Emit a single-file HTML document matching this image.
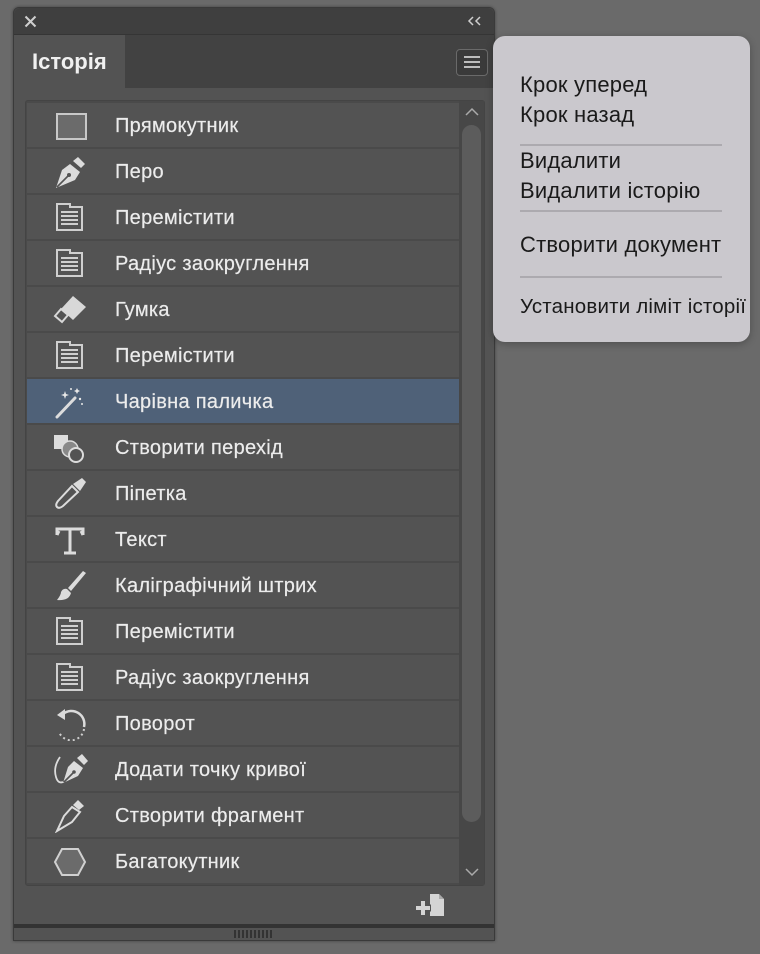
<!DOCTYPE html>
<html><head><meta charset="utf-8">
<style>
*{margin:0;padding:0;box-sizing:border-box}
body{width:760px;height:954px;background:#6a6a6a;font-family:"Liberation Sans","DejaVu Sans",sans-serif;position:relative;overflow:hidden}
.panel{position:absolute;left:13px;top:7px;width:482px;height:934px;background:#535353;border:1px solid #3a3a3a;border-radius:6px 6px 0 0;box-shadow:0 0 3px rgba(0,0,0,.4)}
.tbar{position:absolute;left:0;top:0;width:480px;height:26px;background:#3f3f3f;border-radius:6px 6px 0 0}
.tabs{position:absolute;left:0;top:26px;width:480px;height:54px;background:#424242;border-top:1px solid #353535}
.tab{position:absolute;left:0;top:0;width:111px;height:54px;background:#535353}
.tab span{position:absolute;left:18px;top:14px;font-size:22px;font-weight:bold;color:#f0f0f0}
.menubtn{position:absolute;left:442px;top:14px;width:32px;height:27px;border:1.5px solid #6a6a6a;border-radius:4px;background:#3a3a3a}
.menubtn i{position:absolute;left:7px;width:16px;height:2px;background:#bdbdbd}
.list{position:absolute;left:11px;top:92px;width:460px;height:786px;background:#4a4a4a;border:1px solid #444;border-radius:3px}
.row{position:absolute;left:1px;width:432px;height:44px;background:#535353}
.row.sel{background:#4f6178}
.row span{position:absolute;left:88px;top:12px;font-size:20px;color:#ececec;letter-spacing:.3px;-webkit-text-stroke:.2px #ececec}
.row svg{position:absolute;left:24px;top:6px}
.sb{position:absolute;left:433px;top:0;width:25px;height:784px;background:#474747}
.thumb{position:absolute;left:3px;top:24px;width:19px;height:697px;background:#5c5c5c;border-radius:10px}
.menu{position:absolute;left:493px;top:36px;width:257px;height:306px;background:#cac8cd;border-radius:12px;box-shadow:0 2px 8px rgba(0,0,0,.25)}
.menu div{position:absolute;left:27px;font-size:22px;color:#1a1a1a;letter-spacing:.2px}
.menu hr{position:absolute;left:27px;width:202px;border:0;height:2px;background:#acaaaf}
</style></head><body>
<div class="panel">
 <div class="tbar">
  <svg style="position:absolute;left:10px;top:7px" width="13" height="13"><path d="M1.5 1.5L11.5 11.5M11.5 1.5L1.5 11.5" stroke="#cfcfcf" stroke-width="2"/></svg>
  <svg style="position:absolute;left:453px;top:8px" width="16" height="10"><path d="M6 1L2 5L6 9M13 1L9 5L13 9" stroke="#cfcfcf" stroke-width="1.5" fill="none"/></svg>
 </div>
 <div class="tabs">
  <div class="tab"><span>Історія</span></div>
  <div class="menubtn"><i style="top:6px"></i><i style="top:11px"></i><i style="top:16px"></i></div>
 </div>
 <div class="list">
  <div class="row" style="top:2px"><svg width="40" height="34"><rect x="6" y="5" width="29" height="25" fill="#6b6b6b" stroke="#c8c8c8" stroke-width="2"/></svg><span>Прямокутник</span></div>
  <div class="row" style="top:48px"><svg width="40" height="34"><g fill="#dcdcdc"><path d="M22 6L27 2L34 9L30 13Z"/><path d="M19 9L29 17L24 25L5 33L11 15Z"/></g><path d="M6 32L17 21" stroke="#535353" stroke-width="1.6"/><circle cx="18" cy="20" r="2" fill="#535353"/></svg><span>Перо</span></div>
  <div class="row" style="top:94px"><svg width="40" height="34"><path d="M6 3h13v3h12v23H6z" fill="none" stroke="#cfcfcf" stroke-width="2"/><g stroke="#cfcfcf" stroke-width="2"><path d="M10 11h17M10 15h17M10 19h17M10 23h17"/></g></svg><span>Перемістити</span></div>
  <div class="row" style="top:140px"><svg width="40" height="34"><path d="M6 3h13v3h12v23H6z" fill="none" stroke="#cfcfcf" stroke-width="2"/><g stroke="#cfcfcf" stroke-width="2"><path d="M10 11h17M10 15h17M10 19h17M10 23h17"/></g></svg><span>Радіус заокруглення</span></div>
  <div class="row" style="top:186px"><svg width="40" height="34"><path d="M22 3L35 14L22 27L10 16Z" fill="#d8d8d8"/><path d="M10 16L17 22L11 29L4 23Z" fill="#535353" stroke="#d8d8d8" stroke-width="2"/></svg><span>Гумка</span></div>
  <div class="row" style="top:232px"><svg width="40" height="34"><path d="M6 3h13v3h12v23H6z" fill="none" stroke="#cfcfcf" stroke-width="2"/><g stroke="#cfcfcf" stroke-width="2"><path d="M10 11h17M10 15h17M10 19h17M10 23h17"/></g></svg><span>Перемістити</span></div>
  <div class="row sel" style="top:278px"><svg width="40" height="34"><path d="M6 32L24 13" stroke="#dcdcdc" stroke-width="3" stroke-linecap="round"/><g fill="#e8e8e8"><path d="M14 6l1 3 3 1-3 1-1 3-1-3-3-1 3-1z"/><path d="M26 3l1 2 2 1-2 1-1 2-1-2-2-1 2-1z"/><circle cx="29" cy="14" r="1.2"/><circle cx="31" cy="19" r="1"/><circle cx="20" cy="4" r="1"/></g></svg><span>Чарівна паличка</span></div>
  <div class="row" style="top:324px"><svg width="40" height="34"><rect x="3" y="4" width="14" height="14" fill="#dcdcdc"/><circle cx="19" cy="18" r="8" fill="#888" stroke="#dcdcdc" stroke-width="1.5"/><circle cx="25" cy="24" r="7" fill="#535353" stroke="#dcdcdc" stroke-width="2"/></svg><span>Створити перехід</span></div>
  <div class="row" style="top:370px"><svg width="40" height="34"><path d="M22 7L31 1L35 5L29 14Z" fill="#dcdcdc"/><path d="M21 9L27 15L12 29Q8 32 6 30Q4 28 7 24Z" fill="none" stroke="#dcdcdc" stroke-width="2"/></svg><span>Піпетка</span></div>
  <div class="row" style="top:416px"><svg width="40" height="34"><path d="M6 12V6H32V12M19 6V30M13 30H25M6 12L8 8M32 12L30 8" stroke="#dcdcdc" stroke-width="3" fill="none"/></svg><span>Текст</span></div>
  <div class="row" style="top:462px"><svg width="40" height="34"><path d="M32 2L35 4L20 22L17 19Z" fill="#dcdcdc"/><path d="M16 20L20 24Q18 32 6 31Q10 26 10 23Q12 19 16 20Z" fill="#dcdcdc"/></svg><span>Каліграфічний штрих</span></div>
  <div class="row" style="top:508px"><svg width="40" height="34"><path d="M6 3h13v3h12v23H6z" fill="none" stroke="#cfcfcf" stroke-width="2"/><g stroke="#cfcfcf" stroke-width="2"><path d="M10 11h17M10 15h17M10 19h17M10 23h17"/></g></svg><span>Перемістити</span></div>
  <div class="row" style="top:554px"><svg width="40" height="34"><path d="M6 3h13v3h12v23H6z" fill="none" stroke="#cfcfcf" stroke-width="2"/><g stroke="#cfcfcf" stroke-width="2"><path d="M10 11h17M10 15h17M10 19h17M10 23h17"/></g></svg><span>Радіус заокруглення</span></div>
  <div class="row" style="top:600px"><svg width="40" height="34"><path d="M12 7A13 13 0 0 1 33 20" stroke="#dcdcdc" stroke-width="2.5" fill="none"/><path d="M6 8L14 2L14 13Z" fill="#dcdcdc"/><path d="M33 22A13 13 0 0 1 8 25" stroke="#cfcfcf" stroke-width="2" stroke-dasharray="2 3" fill="none"/></svg><span>Поворот</span></div>
  <div class="row" style="top:646px"><svg width="40" height="34"><g fill="#dcdcdc"><path d="M26 5L31 1L37 8L33 12Z"/><path d="M23 8L32 15L27 23L12 30L17 14Z"/></g><path d="M13 29L22 20" stroke="#535353" stroke-width="1.6"/><circle cx="23" cy="19" r="1.8" fill="#535353"/><path d="M9 4Q2 14 5 24Q7 31 12 29" stroke="#dcdcdc" stroke-width="1.8" fill="none"/></svg><span>Додати точку кривої</span></div>
  <div class="row" style="top:692px"><svg width="40" height="34"><path d="M22 6L27 1L33 7L28 11Z" fill="#dcdcdc"/><path d="M21 8L29 13L21 23L6 32L13 17Z" fill="none" stroke="#dcdcdc" stroke-width="2"/></svg><span>Створити фрагмент</span></div>
  <div class="row" style="top:738px"><svg width="40" height="34"><path d="M11 4H27L34 17L27 30H11L4 17Z" fill="#6b6b6b" stroke="#d0d0d0" stroke-width="2"/></svg><span>Багатокутник</span></div>
  <div class="sb"><div class="thumb"></div>
   <svg style="position:absolute;left:5px;top:6px" width="16" height="10"><path d="M2 8L8 2L14 8" stroke="#aaa" stroke-width="1.5" fill="none"/></svg>
   <svg style="position:absolute;left:5px;top:766px" width="16" height="10"><path d="M2 2L8 8L14 2" stroke="#aaa" stroke-width="1.5" fill="none"/></svg>
  </div>
 </div>
 <svg style="position:absolute;left:400px;top:884px" width="32" height="26"><path d="M16 2H25L30 7V24H16Z" fill="#d4d4d4"/><path d="M25 2V7H30" fill="#aaa"/><path d="M1 16H17M9 8V24" stroke="#535353" stroke-width="7"/><path d="M2 16H16M9 9V23" stroke="#d4d4d4" stroke-width="4"/></svg>
 <div style="position:absolute;left:0;top:916px;width:480px;height:4px;background:#333"></div>
 <div style="position:absolute;left:220px;top:922px;width:39px;height:8px;background:repeating-linear-gradient(90deg,#333 0 2px,transparent 2px 4px)"></div>
</div>
<div class="menu">
 <div style="top:36px">Крок уперед</div>
 <div style="top:66px">Крок назад</div>
 <hr style="top:108px">
 <div style="top:112px">Видалити</div>
 <div style="top:142px">Видалити історію</div>
 <hr style="top:174px">
 <div style="top:196px">Створити документ</div>
 <hr style="top:240px">
 <div style="top:259px;font-size:20.5px">Установити ліміт історії</div>
</div>
</body></html>
